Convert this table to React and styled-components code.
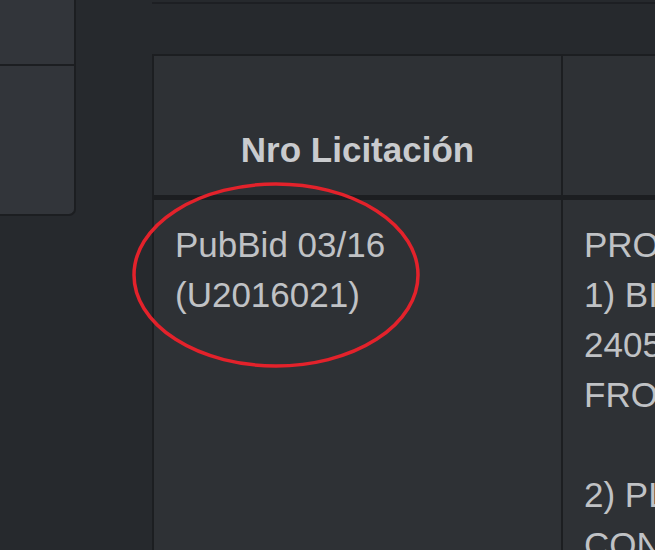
import React from "react";
import styled, { createGlobalStyle } from "styled-components";

const GlobalStyle = createGlobalStyle`
  html, body {
    margin: 0;
    padding: 0;
    width: 655px;
    height: 550px;
    overflow: hidden;
    background: #26292d;
  }
  body {
    font-family: "Liberation Sans", Arial, sans-serif;
  }
`;

const Page = styled.div`
  position: relative;
  display: flex;
  align-items: flex-start;
  gap: 76px;
  width: 655px;
  height: 550px;
  overflow: hidden;
`;

const SidePanel = styled.div`
  flex: 0 0 74px;
  height: 214px;
  display: flex;
  flex-direction: column;
  background: #32353a;
  border-right: 2px solid #1c1e21;
  border-bottom: 2px solid #1c1e21;
  border-bottom-right-radius: 7px;
`;

const PanelItem = styled.div`
  height: ${(p) => p.$h}px;
  border-bottom: ${(p) => (p.$divider ? "2px solid #1c1e21" : "none")};
`;

const Main = styled.div`
  flex: 1;
  min-width: 0;
  display: flex;
  flex-direction: column;
`;

const TopRule = styled.div`
  height: 2px;
  border-bottom: 2px solid #1d1f23;
  margin-bottom: 50px;
`;

const Table = styled.table`
  border-collapse: separate;
  border-spacing: 0;
  table-layout: fixed;
  width: 1351px;
  flex: none;
  border-top: 2px solid #1c1e21;
  border-left: 2px solid #1c1e21;
  color: #c0c2c5;
  font-size: 35px;
  line-height: 50px;
`;

const Th = styled.th`
  width: ${(p) => p.$w}px;
  height: 99px;
  padding: 20px;
  vertical-align: bottom;
  text-align: center;
  font-weight: bold;
  color: #c9cbce;
  background: #2e3135;
  border-bottom: 5px solid #1c1e21;
  border-left: ${(p) => (p.$first ? "none" : "2px solid #1c1e21")};
  white-space: nowrap;
`;

const Td = styled.td`
  padding: 20px 20px 20px 21px;
  vertical-align: top;
  background: #2e3135;
  border-left: ${(p) => (p.$first ? "none" : "2px solid #1c1e21")};
  height: 400px;
`;

const Line = styled.div`
  white-space: nowrap;
  min-height: 50px;
`;

const Mark = styled.svg`
  position: absolute;
  left: 131px;
  top: 181px;
  pointer-events: none;
`;

const descLines = [
  "PROCUREMENT OF:",
  "1) BIDS FOR THE SUPPLY OF",
  "24050 UNITS OF STEEL PIPES",
  "FROM APPROVED VENDORS",
  "",
  "2) PLANNING AND",
  "CONSTRUCTION WORKS",
];

export default function App() {
  return (
    <>
      <GlobalStyle />
      <Page>
        <SidePanel>
          <PanelItem $h={64} $divider />
          <PanelItem $h={148} />
        </SidePanel>
        <Main>
          <TopRule />
          <Table>
            <colgroup>
              <col style={{ width: 407 }} />
              <col style={{ width: 942 }} />
            </colgroup>
            <thead>
              <tr>
                <Th $first>Nro Licitación</Th>
                <Th>Descripción</Th>
              </tr>
            </thead>
            <tbody>
              <tr>
                <Td $first>
                  <Line>PubBid 03/16</Line>
                  <Line>(U2016021)</Line>
                </Td>
                <Td>
                  {descLines.map((l, i) => (
                    <Line key={i}>{l}</Line>
                  ))}
                </Td>
              </tr>
            </tbody>
          </Table>
        </Main>
        <Mark width="292" height="190" viewBox="0 0 292 190">
          <ellipse
            cx="145"
            cy="94"
            rx="142"
            ry="91"
            fill="none"
            stroke="#e3222b"
            strokeWidth="3.5"
          />
        </Mark>
      </Page>
    </>
  );
}
